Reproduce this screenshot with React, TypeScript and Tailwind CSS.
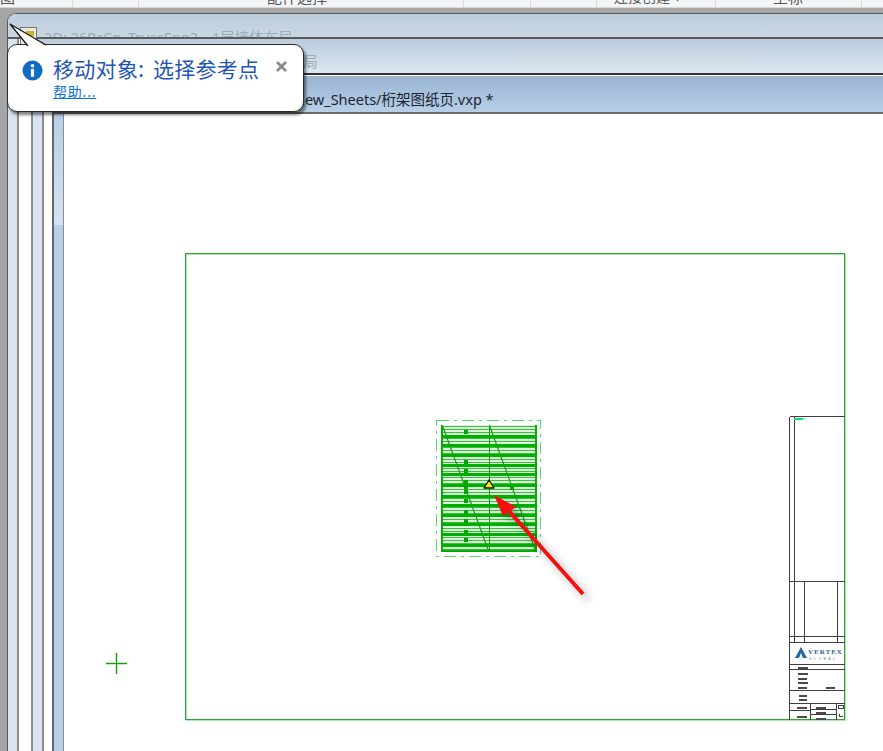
const thickRows = [435, 444, 454, 464, 473, 484, 495, 504, 514, 523, 533, 544]
const dots: [number, number][] = [[466, 432], [466, 462], [466, 471], [466, 482], [466, 487], [466, 492], [466, 501], [466, 512], [466, 521], [466, 532], [466, 540], [512, 488]]
const thinRows = Array.from({ length: 42 }, (_, i) => 426 + i * 3)

const ink = '#3f3f3f'
// title block lines: x1, y1, x2, y2
const blockLines = [
  [790, 416, 845, 416], [790, 416, 790, 719], [795, 416, 795, 642], [805, 581, 805, 642], [838, 581, 838, 642],
  [790, 581, 845, 581], [790, 636, 845, 636], [790, 642, 845, 642], [790, 664, 845, 664], [790, 669, 845, 669],
  [790, 690, 845, 690], [790, 703, 845, 703], [790, 710, 811, 710], [811, 703, 811, 719], [837, 703, 837, 719],
  [811, 709, 837, 709], [811, 714, 837, 714],
]
const blockDashes = [
  [799, 667, 809], [799, 673, 809], [799, 678, 808], [799, 682, 809], [799, 687, 808], [827, 687, 836],
  [800, 695, 808], [800, 699, 808], [798, 707, 808], [798, 716, 808], [817, 707, 827], [817, 712, 827], [817, 718, 827],
]

function Drawing() {
  return (
    <svg className="absolute inset-0 h-full w-full" viewBox="65 114 819 637" shapeRendering="crispEdges">
      {/* sheet border */}
      <rect x="187.5" y="254.5" width="659" height="466" fill="none" stroke="#b5e2b5" />
      <rect x="186.5" y="253.5" width="659" height="466" fill="none" stroke="#2fa32f" />
      <path d="M117.5 653V674M107 663.5H128" stroke="#c4e8c4" strokeWidth="3" fill="none" />
      <path d="M117.5 653V674M107 663.5H128" stroke="#1f9a1f" fill="none" />

      {/* truss view */}
      <rect x="437.5" y="420.5" width="104" height="136" fill="none" stroke="#5ad870" strokeWidth="1.5" strokeDasharray="12 5 3 5" />
      <g transform="translate(1 0)">
        <rect x="441" y="425" width="95" height="127" fill="#dcf5dc" />
        {thinRows.map((y) => (
          <line key={y} x1="441" x2="536" y1={y} y2={y} stroke="#3cc03c" />
        ))}
        {thickRows.map((y) => (
          <rect key={y} x="441" y={y} width="95" height="3" fill="#00b000" />
        ))}
        <rect x="441" y="425" width="2" height="127" fill="#00b000" />
        <rect x="535" y="425" width="2" height="127" fill="#00b000" />
        <rect x="441" y="550" width="95" height="2" fill="#00b000" />
        <rect x="489" y="425" width="1" height="127" fill="#12a012" />
        <g shapeRendering="auto" stroke="#12a012" strokeWidth="1.2">
          <line x1="443" y1="427" x2="489" y2="552" />
          <line x1="490" y1="427" x2="536" y2="552" />
        </g>
        {dots.map(([x, y]) => (
          <rect key={`${x}-${y}`} x={x - 2} y={y - 2} width="4" height="4" fill="#00a800" />
        ))}
      </g>

      {/* title block */}
      {blockLines.map(([x1, y1, x2, y2]) => (
        <line key={`${x1}-${y1}-${x2}-${y2}`} x1={x1 + 0.5} y1={y1 + 0.5} x2={x2 + 0.5} y2={y2 + 0.5} stroke={ink} />
      ))}
      {blockDashes.map(([x1, y, x2]) => (
        <rect key={`${x1}-${y}`} x={x1} y={y} width={x2 - x1} height="1.5" fill="#4a4a4a" />
      ))}
      <path d="M839 705h5v3h-5zM840 714v2h4" fill="none" stroke={ink} />
      <rect x="795" y="418" width="9" height="2" fill="#10dc70" />
      <rect x="804" y="418" width="3" height="1" fill="#8cecb8" />
      <g shapeRendering="auto">
        <path d="M802 647L808 658H796Z" fill="#22689f" />
        <path d="M802 653L804 658H800Z" fill="#ffffff" />
        <text x="809" y="654" fontSize="7" fontWeight="700" letterSpacing="1" fill="#2c6496" fontFamily="'Liberation Serif', serif">VERTEX</text>
        <text x="810" y="660" fontSize="3.5" letterSpacing="2.4" fill="#5b87ad" fontFamily="'Liberation Sans', sans-serif">GLOBAL</text>
      </g>

      <g transform="translate(1 0)" shapeRendering="auto">
        {/* reference point */}
        <path d="M489 480L494 488H484Z" fill="#fbee00" stroke="#111" strokeWidth="1.3" strokeLinejoin="round" />
        {/* arrow */}
        <g className="drop-shadow-[5px_5px_4px_rgba(0,0,0,0.35)]">
          <line x1="583" y1="594" x2="507" y2="509" stroke="#f50f0f" strokeWidth="4" />
          <path d="M494 495L516 507L503 516Z" fill="#f50f0f" />
        </g>
      </g>
    </svg>
  )
}

function Popover() {
  return (
    <div className="absolute left-[7px] top-[44px] h-[68px] w-[297px] rounded-[10px] border border-[#2a2a2a] bg-white shadow-[2px_3px_3px_rgba(0,0,0,0.5)]">
      <svg className="absolute -top-[22px] left-[1px] h-[24px] w-[40px]" viewBox="0 0 40 24">
        <path d="M1 1L19 23H37Z" fill="#ffffff" />
        <path d="M1 1L19 23M1 1L37 22" stroke="#1a1a1a" fill="none" strokeWidth="1.3" />
      </svg>
      <div className="flex items-start pl-[14px] pt-[14px]">
        <svg className="mt-[1px] h-[21px] w-[21px] shrink-0" viewBox="0 0 21 21">
          <circle cx="10.5" cy="10.5" r="10" fill="#0f6cc4" />
          <circle cx="10.5" cy="5.8" r="1.8" fill="#ffffff" />
          <rect x="8.9" y="8.8" width="3.2" height="8" fill="#ffffff" />
        </svg>
        <div className="ml-[10px]">
          <div className="text-[21px] leading-[21px] tracking-[0.3px] text-[#1f55b5] [word-spacing:3px]">移动对象: 选择参考点</div>
          <div className="mt-[2px] text-[14px] leading-[19px] tracking-[0.8px] text-[#0b70dc] underline">帮助...</div>
        </div>
        <svg className="ml-[17px] mt-[2px] h-[11px] w-[11px] shrink-0" viewBox="0 0 11 11">
          <path d="M1 1L10 10M10 1L1 10" stroke="#8c8c8c" strokeWidth="2.8" />
        </svg>
      </div>
    </div>
  )
}

function TopStrip() {
  return (
    <div className="flex h-[8px] overflow-hidden border-b border-[#d8d8d8] bg-[#f4f5f7] text-[15px] leading-[14px] text-[#555]">
      <div className="w-[73px] border-r border-[#dcdcdc]"><div className="-mt-[10px]">图</div></div>
      <div className="w-[66px] border-r border-[#dcdcdc]" />
      <div className="w-[325px] border-r border-[#dcdcdc] pl-[128px]"><div className="-mt-[10px]">配件选择</div></div>
      <div className="w-[67px] border-r border-[#dcdcdc]" />
      <div className="w-[66px] border-r border-[#dcdcdc]" />
      <div className="w-[119px] border-r border-[#dcdcdc] pl-[17px]"><div className="-mt-[10px] text-[14px]">连接创建 ▾</div></div>
      <div className="w-[146px] border-r border-[#dcdcdc] pl-[57px]"><div className="-mt-[10px]">坐标</div></div>
      <div className="flex-1" />
    </div>
  )
}

export default function App() {
  return (
    <div className="relative flex h-[751px] w-[883px] flex-col overflow-hidden bg-white font-['Noto_Sans','Noto_Sans_CJK_SC',sans-serif]">
      <TopStrip />
      <div className="flex min-h-0 flex-1 flex-col bg-[#a6a6a6] pl-[7px] pt-[5px]">
        {/* outer window */}
        <div className="flex min-h-0 flex-1 flex-col overflow-hidden rounded-tl-[9px] border-l border-t border-[#555] bg-white">
          <div className="h-[25px] shrink-0 overflow-hidden border-b-2 border-[#5a5a5a] bg-linear-to-b from-[#bdcedd] to-[#cad7e3] pl-[36px] pt-[13px] text-[14.5px] leading-[20px] whitespace-nowrap text-[#9eabb8]">
            2D: 26RcCn_TrussEng2 _ 1层墙体布局
          </div>
          <div className="flex min-h-0 flex-1">
            <div className="w-[11px] shrink-0 border-r-2 border-[#8c8c8c] bg-[#d8e5f1]" />
            <div className="w-[12px] shrink-0 bg-white" />
            {/* middle window */}
            <div className="flex min-w-0 flex-1 flex-col border-l-2 border-[#8c8c8c]">
              <div className="h-[36px] shrink-0 overflow-hidden border-b-2 border-[#333] bg-linear-to-b from-[#bbccdc] to-[#dce7f2] pl-[36px] pt-[12px] text-[14.5px] leading-[20px] whitespace-nowrap text-[#9eabb8]">
                2D: 26RcCn_TrussEng2 _ 1层墙体布局
              </div>
              <div className="flex min-h-0 flex-1">
                <div className="w-[11px] shrink-0 border-r-2 border-[#8c8c8c] bg-[#d8e5f1]" />
                <div className="w-[8px] shrink-0 bg-white" />
                {/* active window */}
                <div className="flex min-w-0 flex-1 flex-col border-l-2 border-[#666]">
                  <div className="h-[39px] shrink-0 overflow-hidden border-t border-white border-b-2 border-b-[#6a6a6a] bg-linear-to-b from-[#9ab4d1] to-[#b7cfe7] pl-[79px] pt-[13px] text-[14.5px] leading-[20px] whitespace-nowrap text-[#1c2430]">
                    3D: 26RcCn_TrussEng2/View_Sheets/桁架图纸页.vxp *
                  </div>
                  <div className="flex min-h-0 flex-1">
                    <div className="w-[10px] shrink-0 border-r border-[#8c8c8c] bg-[#b8cfe7]">
                      <div className="h-[111px] bg-linear-to-b from-[#b8cfe7] to-[#d5e3f2]" />
                    </div>
                    <div className="relative min-w-0 flex-1 bg-white">
                      <Drawing />
                    </div>
                  </div>
                </div>
              </div>
            </div>
          </div>
        </div>
      </div>
      {/* window icon, partly under the tip of the popover */}
      <div className="absolute left-[20px] top-[27px] h-[18px] w-[17px] border border-[#777] bg-[#e9e9e9] p-[3px]">
        <div className="ml-[2px] h-[5px] w-[8px] bg-[#c8b820]" />
      </div>
      <Popover />
    </div>
  )
}
